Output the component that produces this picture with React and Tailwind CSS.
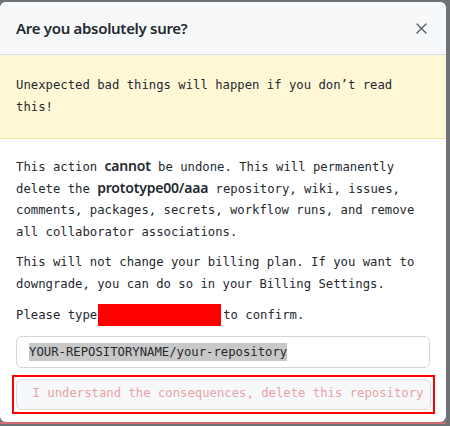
import React from 'react';

const mono = { fontFamily: '"DejaVu Sans Mono", monospace' };

export default function App() {
  return (
    <div className="w-[450px] h-[426px] bg-[#6f7276] pt-[2px] overflow-hidden">
      <div className="w-[446px] h-[420px] bg-white rounded-[6px] overflow-hidden flex flex-col">
        {/* Header */}
        <div className="h-[53px] shrink-0 bg-[#f6f8fa] border-b border-[#d8dee4] flex items-center justify-between pl-4 pr-[19px]">
          <h2 className="text-[15px] font-semibold text-[#24292f] tracking-[-0.3px] font-['Noto_Sans',sans-serif]">
            Are you absolutely sure?
          </h2>
          <svg width="11" height="11" viewBox="0 0 11 11" fill="none" stroke="#57606a" strokeWidth="1.4" strokeLinecap="round">
            <path d="M1 1l9 9M10 1l-9 9" />
          </svg>
        </div>

        {/* Warning flash */}
        <div
          className="shrink-0 bg-[#fff8d6] border-b border-[#f0e2a0] px-4 py-[20px] text-[12.25px] leading-[21.5px] text-[#24292f]"
          style={mono}
        >
          Unexpected bad things will happen if you don’t read this!
        </div>

        {/* Body */}
        <div className="px-4 pt-[18px] text-[12.25px] leading-[21.5px] text-[#24292f]" style={mono}>
          <p>
            This action <strong className="font-semibold text-[14px] leading-none tracking-[-0.2px] font-['Noto_Sans',sans-serif]">cannot</strong> be undone. This will permanently delete the{' '}
            <strong className="font-semibold text-[14px] leading-none tracking-[-0.2px] font-['Noto_Sans',sans-serif]">prototype00/aaa</strong> repository, wiki, issues, comments, packages, secrets, workflow runs, and remove all collaborator associations.
          </p>
          <p className="mt-[9px]">
            This will not change your billing plan. If you want to downgrade, you can do so in your Billing Settings.
          </p>
          <p className="mt-[10px]">
            Please type<span className="inline-block align-middle w-[123px] h-[22px] bg-[#ff0000] ml-[1px] mr-[2px] -mt-[2px]"></span>to confirm.
          </p>
          <div className="mt-[9px] h-[32px] border border-[#d0d7de] rounded-[6px] flex items-center pl-[12px]">
            <span className="bg-[#c8c8c8] leading-[18px] text-[#24292f]">YOUR-REPOSITORYNAME/your-repository</span>
          </div>
          <div className="mt-[7px] -mx-[4.5px] border-2 border-[#ff0000] p-[2px]">
            <button
              className="w-full h-[31px] bg-[#f6f8fa] border border-[#d8dee4] rounded-[6px] flex items-center justify-start pl-[16px] whitespace-nowrap text-[#e8a3a8] overflow-hidden"
              style={mono}
            >
              I understand the consequences, delete this repository
            </button>
          </div>
        </div>
      </div>
      <div className="h-[2px] w-[446px] bg-[#d56a72]"></div>
    </div>
  );
}
